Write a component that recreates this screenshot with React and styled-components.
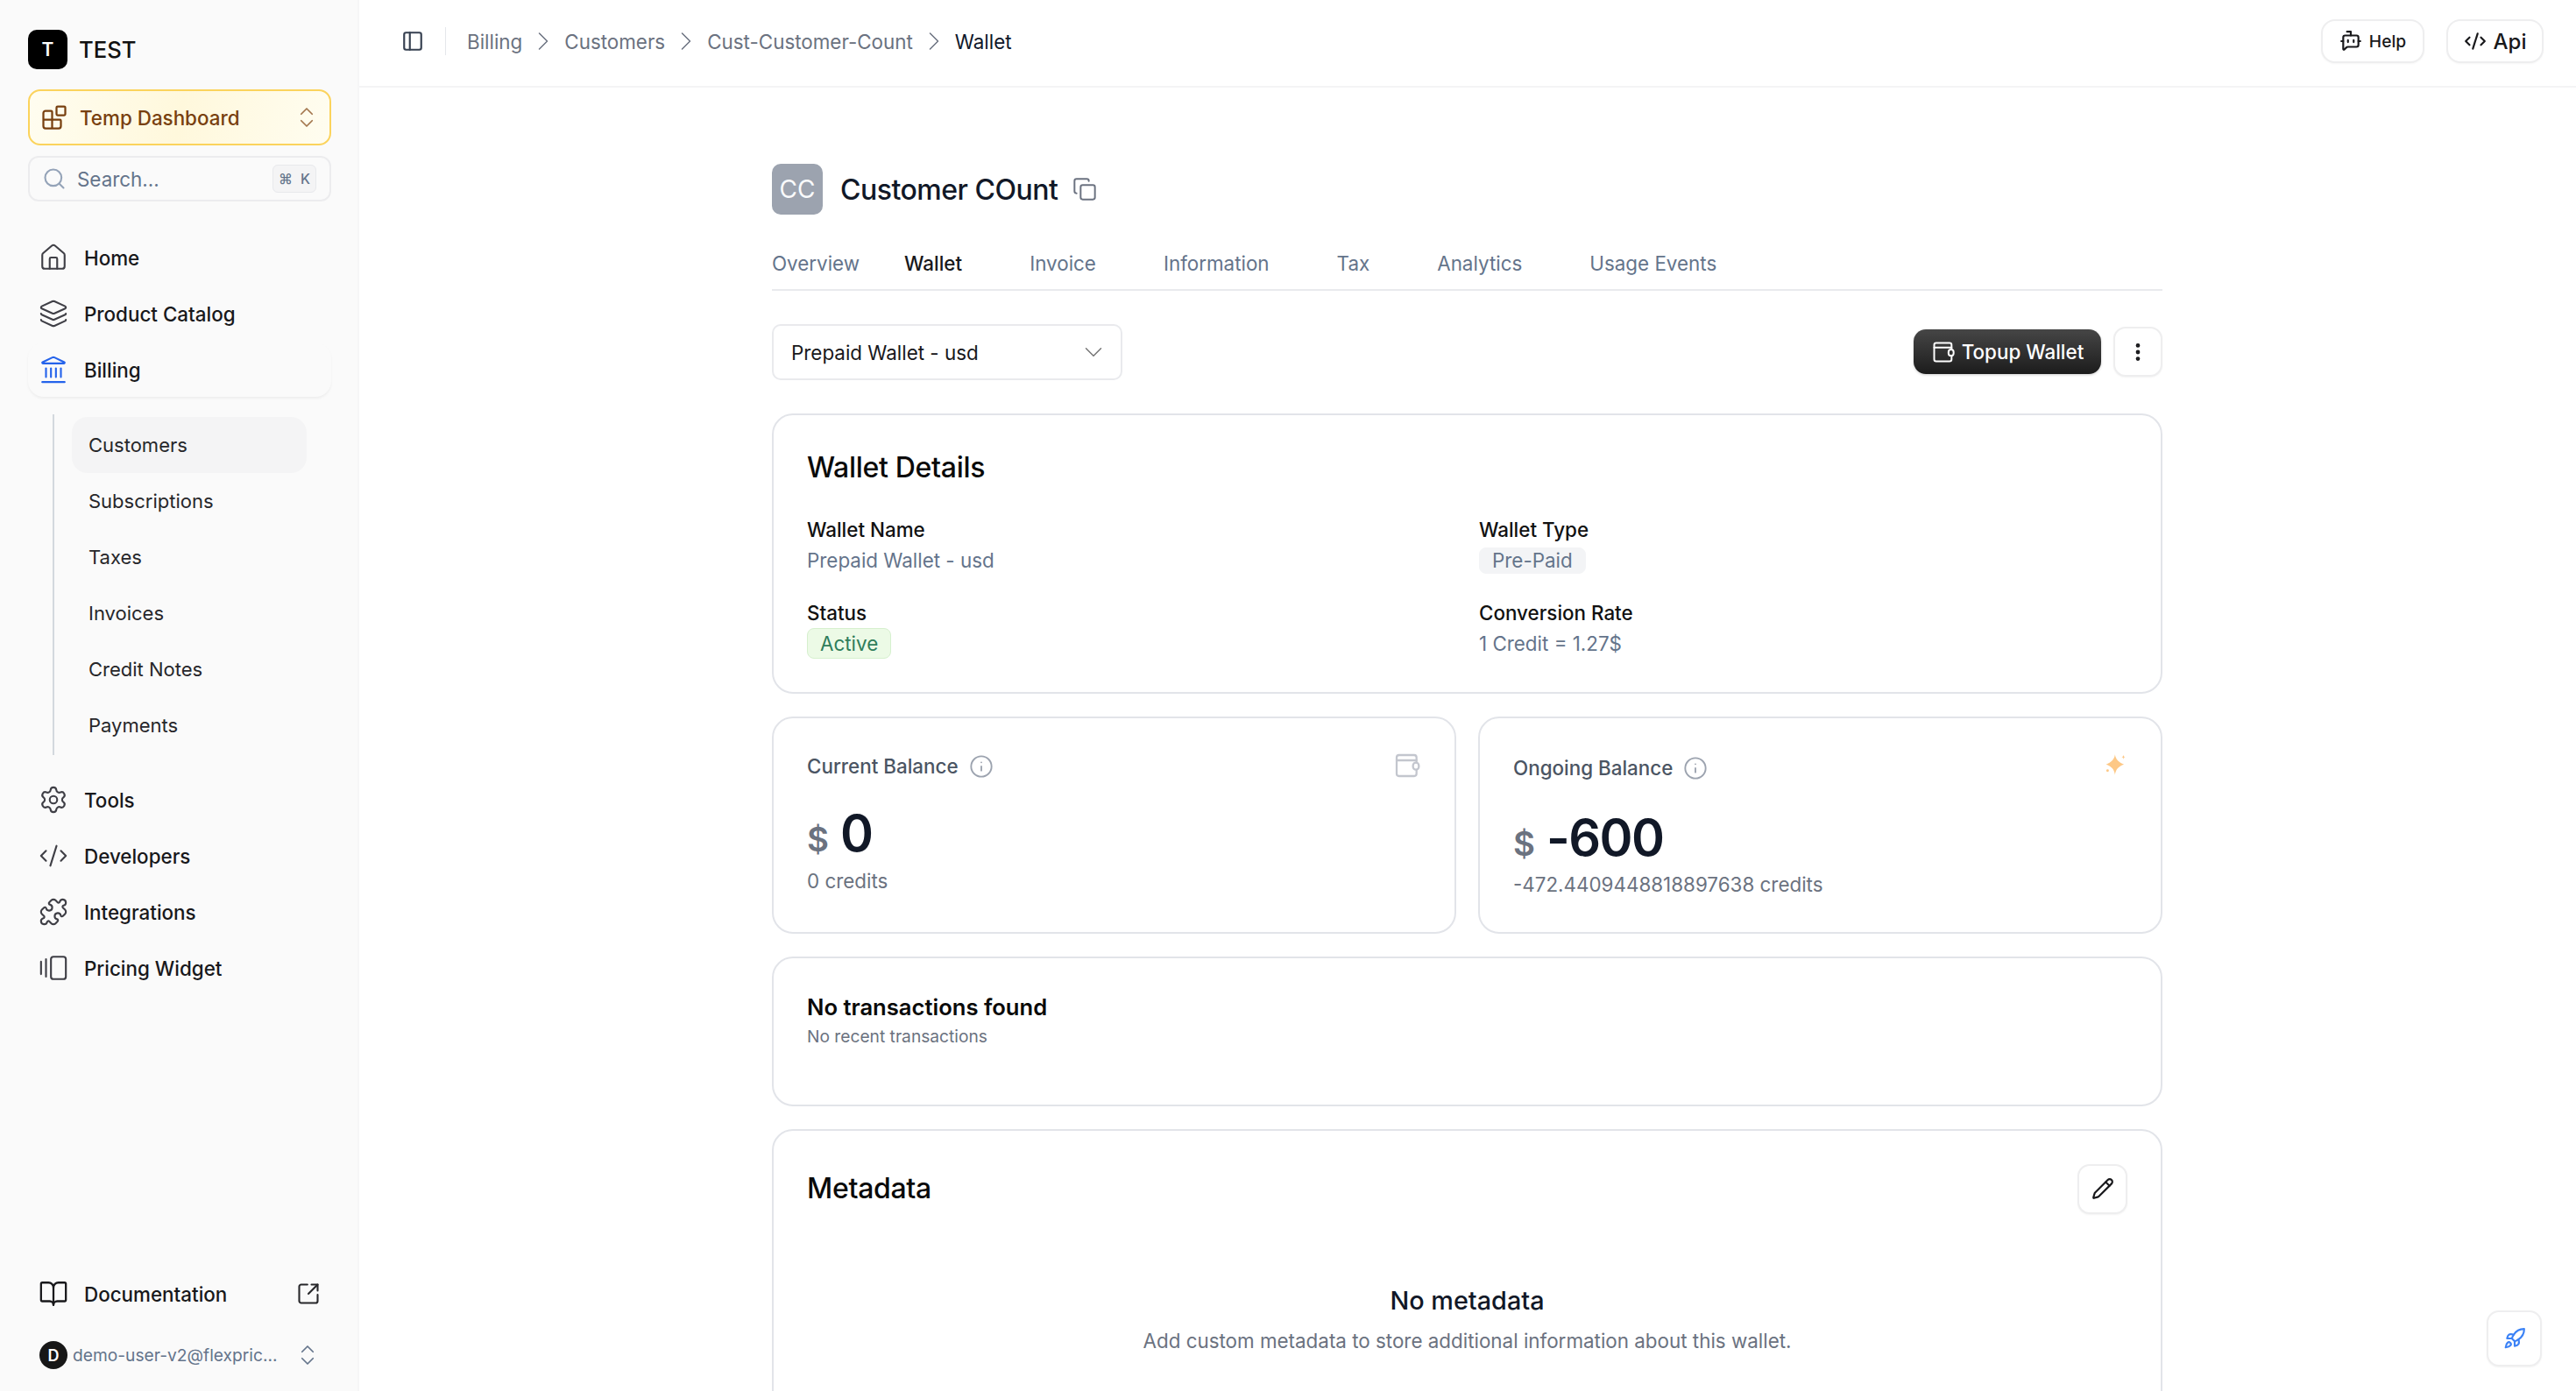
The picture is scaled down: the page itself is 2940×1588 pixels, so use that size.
import React from "react";
import styled, { createGlobalStyle } from "styled-components";
import {
  Blocks, ChevronsUpDown, Search, House, Layers, Landmark, Settings, CodeXml, Puzzle,
  GalleryHorizontalEnd, BookOpen, SquareArrowOutUpRight, PanelLeft, ChevronRight,
  BotMessageSquare, Copy, ChevronDown, EllipsisVertical, Info, Pencil, Rocket,
} from "lucide-react";

const GlobalStyle = createGlobalStyle`
  html, body { margin: 0; padding: 0; height: 100%; background: #fff; }
  body { font-family: Inter, "Liberation Sans", sans-serif; color: #18181b; }
  * { box-sizing: border-box; }
`;

const Page = styled.div`
  display: flex;
  height: 100vh;
  overflow: hidden;
`;

const Sidebar = styled.aside`
  width: 410px;
  flex: none;
  display: flex;
  flex-direction: column;
  padding: 34px 30px 25px 32px;
  background: #fafafa;
  border-right: 2px solid #f6f6f7;
`;
const Brand = styled.div`
  display: flex;
  align-items: center;
  gap: 13px;
  height: 45px;
  font-size: 25.6px;
  font-weight: 500;
  color: #111;
`;
const BrandMark = styled.div`
  width: 45px;
  height: 45px;
  border-radius: 10px;
  background: #000;
  color: #fff;
  display: flex;
  align-items: center;
  justify-content: center;
  font-size: 21px;
  font-weight: 600;
`;
const EnvSwitch = styled.div`
  margin-top: 23px;
  height: 64px;
  display: flex;
  align-items: center;
  padding: 0 11px 0 13px;
  border: 2px solid #fbd35c;
  border-radius: 14px;
  background: linear-gradient(100deg, #fffdf0 0%, #fff8dc 50%, #fffdf0 100%);
  color: #78400f;
  font-size: 22.4px;
  font-weight: 500;
  svg { flex: none; }
`;
const EnvLabel = styled.span`
  flex: 1;
  margin-left: 14px;
`;
const SearchBox = styled.div`
  margin-top: 12px;
  height: 52px;
  display: flex;
  align-items: center;
  padding: 0 15px 0 14px;
  border: 2px solid #ececee;
  border-radius: 12px;
  color: #64748b;
  font-size: 22.4px;
`;
const SearchText = styled.span`
  flex: 1;
  margin-left: 12px;
`;
const Kbd = styled.span`
  width: 50px;
  height: 32px;
  display: flex;
  align-items: center;
  justify-content: center;
  gap: 9px;
  border: 1px solid #e8e9ec;
  border-radius: 6px;
  background: #f4f4f5;
  font-size: 16px;
  font-weight: 500;
  color: #64748b;
`;
const Nav = styled.nav`
  display: flex;
  flex-direction: column;
  gap: 2px;
  margin-top: ${(p) => p.$top}px;
`;
const NavRow = styled.div`
  height: 62px;
  display: flex;
  align-items: center;
  gap: 18px;
  padding: 0 12px;
  border-radius: 18px;
  font-size: 22.4px;
  font-weight: 500;
  color: #18181b;
  background: ${(p) => (p.$open ? "#fafafa" : "transparent")};
  box-shadow: ${(p) => (p.$open ? "0 2px 3px rgba(0,0,0,.05)" : "none")};
  svg { flex: none; }
`;
const NavLabel = styled.span`
  flex: 1;
`;
const SubNav = styled.div`
  margin: 20px 0 0 28px;
  padding: 3px 0 2px 20px;
  border-left: 2px solid #d3d8de;
  display: flex;
  flex-direction: column;
`;
const SubRow = styled.div`
  width: 268px;
  height: 64px;
  display: flex;
  align-items: center;
  padding-left: 19px;
  border-radius: 18px;
  font-size: 22px;
  color: #27272a;
  background: ${(p) => (p.$active ? "#f4f4f5" : "transparent")};
`;
const Bottom = styled.div`
  margin-top: auto;
`;
const UserRow = styled.div`
  margin: 23px 0 0 13px;
  display: flex;
  align-items: center;
  gap: 6px;
  color: #64748b;
  font-size: 19.2px;
  font-weight: 400;
`;
const UserAvatar = styled.div`
  width: 32px;
  height: 32px;
  flex: none;
  border-radius: 50%;
  background: #171717;
  color: #fff;
  display: flex;
  align-items: center;
  justify-content: center;
  font-size: 18px;
  font-weight: 600;
`;
const UserMail = styled.span`
  width: 247px;
`;

const Main = styled.main`
  flex: 1;
  min-width: 0;
  display: flex;
  flex-direction: column;
`;
const TopBar = styled.header`
  height: 100px;
  flex: none;
  display: flex;
  align-items: center;
  padding: 0 37px 4px 48px;
  border-bottom: 2px solid #f4f4f5;
`;
const Divider = styled.div`
  width: 1px;
  height: 32px;
  margin: 0 24px 0 24px;
  background: #e5e7eb;
`;
const Crumbs = styled.div`
  flex: 1;
  display: flex;
  align-items: center;
  gap: 6px;
  font-size: 22.4px;
  color: #6b7280;
`;
const Crumb = styled.span`
  color: ${(p) => (p.$current ? "#0f172a" : "#6b7280")};
`;
const HeadButton = styled.div`
  width: ${(p) => p.$w}px;
  height: 50px;
  margin-left: 25px;
  display: flex;
  align-items: center;
  justify-content: center;
  gap: 8px;
  border: 2px solid #eeeeef;
  border-radius: 16px;
  background: #fff;
  box-shadow: 0 1px 2px rgba(0,0,0,.04);
  color: #18181b;
  font-size: ${(p) => p.$size}px;
  font-weight: 500;
`;

const Content = styled.div`
  width: 1587px;
  margin-left: 471px;
  padding-top: 87px;
`;
const TitleRow = styled.div`
  display: flex;
  align-items: center;
  height: 58px;
`;
const Avatar = styled.div`
  width: 58px;
  height: 58px;
  margin-right: 20px;
  border-radius: 10px;
  background: #9ca3af;
  color: #f9fafb;
  font-size: 28px;
  display: flex;
  align-items: center;
  justify-content: center;
`;
const Title = styled.h1`
  margin: 0 17px 0 0;
  font-size: 32px;
  letter-spacing: -0.5px;
  font-weight: 500;
  color: #111827;
`;
const Tabs = styled.div`
  display: flex;
  gap: 77px;
  margin-top: 37px;
  padding-bottom: 10px;
  border-bottom: 2px solid #e9eaed;
`;
const Tab = styled.div`
  font-size: 22.4px;
  line-height: 38px;
  font-weight: ${(p) => (p.$active ? 500 : 400)};
  color: ${(p) => (p.$active ? "#18181b" : "#64748b")};
  &:first-child { margin-right: -26px; }
`;
const ActionRow = styled.div`
  display: flex;
  align-items: flex-start;
  justify-content: space-between;
  margin-top: 38px;
`;
const WalletSelect = styled.div`
  width: 400px;
  height: 64px;
  display: flex;
  align-items: center;
  justify-content: space-between;
  padding: 0 14px 0 20px;
  border: 2px solid #e9eaed;
  border-radius: 10px;
  font-size: 22.4px;
  color: #18181b;
`;
const Actions = styled.div`
  display: flex;
  align-items: center;
  gap: 14px;
  margin-top: 3px;
`;
const TopupButton = styled.div`
  width: 214px;
  height: 51px;
  display: flex;
  align-items: center;
  justify-content: center;
  gap: 7px;
  border-radius: 14px;
  background: linear-gradient(#464646, #1c1c1c);
  box-shadow: 0 1px 3px rgba(0,0,0,.2);
  color: #fff;
  font-size: 22.4px;
  font-weight: 500;
`;
const IconButton = styled.div`
  width: ${(p) => p.$w}px;
  height: ${(p) => p.$h}px;
  display: flex;
  align-items: center;
  justify-content: center;
  border: 2px solid #eeeeef;
  border-radius: 14px;
  background: #fff;
  box-shadow: 0 1px 2px rgba(0,0,0,.05);
`;
const RocketButton = styled(IconButton)`
  position: fixed;
  right: 39px;
  bottom: 28px;
`;

const Stack = styled.div`
  display: flex;
  flex-direction: column;
  gap: 26px;
  margin-top: 38px;
`;
const Card = styled.section`
  position: relative;
  border: 2px solid #e2e4e9;
  border-radius: 24px;
  background: #fff;
  padding: 38px 38px ${(p) => p.$bottom ?? 38}px;
`;
const CardTitle = styled.h2`
  margin: 0;
  font-size: 32px;
  letter-spacing: -0.3px;
  line-height: 44px;
  font-weight: 500;
  color: #0a0a0a;
`;
const DetailGrid = styled.div`
  display: grid;
  grid-template-columns: 1fr 1fr;
  column-gap: 27px;
  row-gap: 26px;
  margin-top: 32px;
`;
const Label = styled.div`
  font-size: 22.4px;
  line-height: 34px;
  font-weight: 500;
  color: #111;
`;
const Value = styled.div`
  margin-top: 1px;
  font-size: 22.4px;
  line-height: 34px;
  color: #64748b;
`;
const Badge = styled.span`
  display: inline-flex;
  align-items: center;
  height: ${(p) => p.$h}px;
  padding: 0 14px;
  border-radius: 8px;
  font-size: 22.4px;
  color: ${(p) => (p.$green ? "#2f7d5b" : "#64748b")};
  background: ${(p) => (p.$green ? "#ecfae6" : "#f3f4f6")};
  border: 1px solid ${(p) => (p.$green ? "#d6f0ce" : "#f3f4f6")};
`;
const BalanceGrid = styled.div`
  display: grid;
  grid-template-columns: 1fr 1fr;
  gap: 25px;
`;
const BalanceCard = styled(Card)`
  height: 248px;
  padding-top: ${(p) => (p.$shifted ? 40 : 38)}px;
`;
const BalanceHead = styled.div`
  display: flex;
  align-items: flex-start;
  justify-content: space-between;
  height: 34px;
`;
const BalanceLabel = styled.div`
  display: flex;
  align-items: center;
  gap: 12px;
  font-size: 22.4px;
  line-height: 34px;
  font-weight: 500;
  color: #4b5563;
`;
const Amount = styled.div`
  display: flex;
  align-items: baseline;
  gap: 13px;
  height: 72px;
  margin-top: ${(p) => (p.$shifted ? 26 : 23)}px;
  font-size: 57.6px;
  letter-spacing: -1.5px;
  line-height: 72px;
  font-weight: 600;
  color: #111827;
`;
const Currency = styled.span`
  font-size: 38.4px;
  letter-spacing: 0;
  color: #6b7280;
`;
const Credits = styled.div`
  margin-top: ${(p) => (p.$shifted ? 1 : 2)}px;
  font-size: 22.4px;
  line-height: 34px;
  color: #6b7280;
`;
const TxTitle = styled.div`
  font-size: 25.6px;
  line-height: 36px;
  font-weight: 600;
  color: #0a0a0a;
`;
const TxSub = styled.div`
  font-size: 19.2px;
  line-height: 30px;
  color: #6b7280;
`;
const MetaHead = styled.div`
  display: flex;
  align-items: center;
  justify-content: space-between;
  height: 56px;
`;
const Empty = styled.div`
  margin-top: 80px;
  text-align: center;
`;
const EmptyTitle = styled.div`
  font-size: 28.8px;
  line-height: 40px;
  font-weight: 500;
  color: #111827;
`;
const EmptySub = styled.div`
  margin-top: 8px;
  font-size: 22.4px;
  line-height: 36px;
  color: #6b7280;
`;

const WalletIcon = ({ size, color, width = 2 }) => (
  <svg width={size} height={size} viewBox="0 0 24 24" fill="none" stroke={color} strokeWidth={width} strokeLinecap="round" strokeLinejoin="round">
    <path d="M20 9V5a2 2 0 0 0-2-2H5a2 2 0 0 0-2 2v14a2 2 0 0 0 2 2h13a2 2 0 0 0 2-2v-3" />
    <path d="M3 7.500h17" />
    <rect x="17" y="9.500" width="5" height="6" rx="2.500" />
  </svg>
);

const SparkIcon = () => (
  <svg width="26" height="26" viewBox="1.500 0 21 23" fill="#fdc886">
    <path d="M11 1C11.500 6 15 9 20 11 15 13 11.500 16 11 22 10.500 16 7 13 2 11 7 9 10.500 6 11 1z" />
    <path d="M19.500 1.500c.2 1.500.6 2 1.800 2.300-1.200.3-1.600.8-1.800 2.300-.2-1.500-.6-2-1.800-2.300 1.200-.3 1.600-.8 1.800-2.300z" />
    <circle cx="3.500" cy="17.500" r="1.300" />
  </svg>
);

const mainNav = [
  ["Home", House],
  ["Product Catalog", Layers],
];
const billingNav = ["Customers", "Subscriptions", "Taxes", "Invoices", "Credit Notes", "Payments"];
const moreNav = [
  ["Tools", Settings],
  ["Developers", CodeXml],
  ["Integrations", Puzzle],
  ["Pricing Widget", GalleryHorizontalEnd],
];
const crumbs = ["Billing", "Customers", "Cust-Customer-Count"];
const tabs = ["Overview", "Wallet", "Invoice", "Information", "Tax", "Analytics", "Usage Events"];

export default function App() {
  return (
    <>
      <GlobalStyle />
      <Page>
        <Sidebar>
          <Brand>
            <BrandMark>T</BrandMark>
            TEST
          </Brand>
          <EnvSwitch>
            <Blocks size={30} strokeWidth={1.8} color="#78400f" />
            <EnvLabel>Temp Dashboard</EnvLabel>
            <ChevronsUpDown size={30} strokeWidth={1.4} color="#a3764d" />
          </EnvSwitch>
          <SearchBox>
            <Search size={28} strokeWidth={1.8} color="#94a3b8" />
            <SearchText>Search...</SearchText>
            <Kbd><span>⌘</span><span>K</span></Kbd>
          </SearchBox>
          <Nav $top={33}>
            {mainNav.map(([label, Icon]) => (
              <NavRow key={label}>
                <Icon size={34} strokeWidth={1.5} color="#3f3f46" />
                <NavLabel>{label}</NavLabel>
              </NavRow>
            ))}
            <NavRow $open>
              <Landmark size={34} strokeWidth={1.5} color="#2563eb" />
              <NavLabel>Billing</NavLabel>
            </NavRow>
          </Nav>
          <SubNav>
            {billingNav.map((label, i) => (
              <SubRow key={label} $active={i === 0}>{label}</SubRow>
            ))}
          </SubNav>
          <Nav $top={20}>
            {moreNav.map(([label, Icon]) => (
              <NavRow key={label}>
                <Icon size={34} strokeWidth={1.5} color="#3f3f46" />
                <NavLabel>{label}</NavLabel>
              </NavRow>
            ))}
          </Nav>
          <Bottom>
            <NavRow>
              <BookOpen size={34} strokeWidth={1.6} color="#18181b" />
              <NavLabel>Documentation</NavLabel>
              <SquareArrowOutUpRight size={28} strokeWidth={1.8} color="#27272a" />
            </NavRow>
            <UserRow>
              <UserAvatar>D</UserAvatar>
              <UserMail>demo-user-v2@flexpric...</UserMail>
              <ChevronsUpDown size={30} strokeWidth={1.4} color="#64748b" />
            </UserRow>
          </Bottom>
        </Sidebar>

        <Main>
          <TopBar>
            <PanelLeft size={26} strokeWidth={2} color="#374151" />
            <Divider />
            <Crumbs>
              {crumbs.map((c) => (
                <React.Fragment key={c}>
                  <Crumb>{c}</Crumb>
                  <ChevronRight size={36} strokeWidth={1} color="#6b7280" />
                </React.Fragment>
              ))}
              <Crumb $current>Wallet</Crumb>
            </Crumbs>
            <HeadButton $w={118} $size={19.2}>
              <BotMessageSquare size={26} strokeWidth={2} color="#18181b" />
              Help
            </HeadButton>
            <HeadButton $w={111} $size={24}>
              <CodeXml size={26} strokeWidth={2} color="#18181b" />
              Api
            </HeadButton>
          </TopBar>

          <Content>
            <TitleRow>
              <Avatar>CC</Avatar>
              <Title>Customer COunt</Title>
              <Copy size={28} strokeWidth={1.7} color="#6b7280" />
            </TitleRow>
            <Tabs>
              {tabs.map((t) => (
                <Tab key={t} $active={t === "Wallet"}>{t}</Tab>
              ))}
            </Tabs>
            <ActionRow>
              <WalletSelect>
                Prepaid Wallet - usd
                <ChevronDown size={34} strokeWidth={1} color="#737373" />
              </WalletSelect>
              <Actions>
                <TopupButton>
                  <WalletIcon size={28} color="#fff" width={1.7} />
                  Topup Wallet
                </TopupButton>
                <IconButton $w={56} $h={57}>
                  <EllipsisVertical size={26} strokeWidth={2.4} color="#18181b" />
                </IconButton>
              </Actions>
            </ActionRow>

            <Stack>
              <Card>
                <CardTitle>Wallet Details</CardTitle>
                <DetailGrid>
                  <div>
                    <Label>Wallet Name</Label>
                    <Value>Prepaid Wallet - usd</Value>
                  </div>
                  <div>
                    <Label>Wallet Type</Label>
                    <Value><Badge $h={30}>Pre-Paid</Badge></Value>
                  </div>
                  <div>
                    <Label>Status</Label>
                    <Badge $green $h={35}>Active</Badge>
                  </div>
                  <div>
                    <Label>Conversion Rate</Label>
                    <Value>1 Credit = 1.27$</Value>
                  </div>
                </DetailGrid>
              </Card>

              <BalanceGrid>
                <BalanceCard>
                  <BalanceHead>
                    <BalanceLabel>
                      Current Balance
                      <Info size={28} strokeWidth={1.6} color="#9ca3af" />
                    </BalanceLabel>
                    <WalletIcon size={32} color="#c3c6ce" width={1.7} />
                  </BalanceHead>
                  <Amount><Currency>$</Currency>0</Amount>
                  <Credits>0 credits</Credits>
                </BalanceCard>
                <BalanceCard $shifted>
                  <BalanceHead>
                    <BalanceLabel>
                      Ongoing Balance
                      <Info size={28} strokeWidth={1.6} color="#9ca3af" />
                    </BalanceLabel>
                    <SparkIcon />
                  </BalanceHead>
                  <Amount $shifted><Currency>$</Currency>-600</Amount>
                  <Credits $shifted>-472.4409448818897638 credits</Credits>
                </BalanceCard>
              </BalanceGrid>

              <Card $bottom={63}>
                <TxTitle>No transactions found</TxTitle>
                <TxSub>No recent transactions</TxSub>
              </Card>

              <Card $bottom={120}>
                <MetaHead>
                  <CardTitle>Metadata</CardTitle>
                  <IconButton $w={57} $h={57}>
                    <Pencil size={26} strokeWidth={2} color="#18181b" />
                  </IconButton>
                </MetaHead>
                <Empty>
                  <EmptyTitle>No metadata</EmptyTitle>
                  <EmptySub>Add custom metadata to store additional information about this wallet.</EmptySub>
                </Empty>
              </Card>
            </Stack>
          </Content>
        </Main>

        <RocketButton $w={63} $h={64}>
          <Rocket size={26} strokeWidth={2} color="#3b82f6" />
        </RocketButton>
      </Page>
    </>
  );
}
